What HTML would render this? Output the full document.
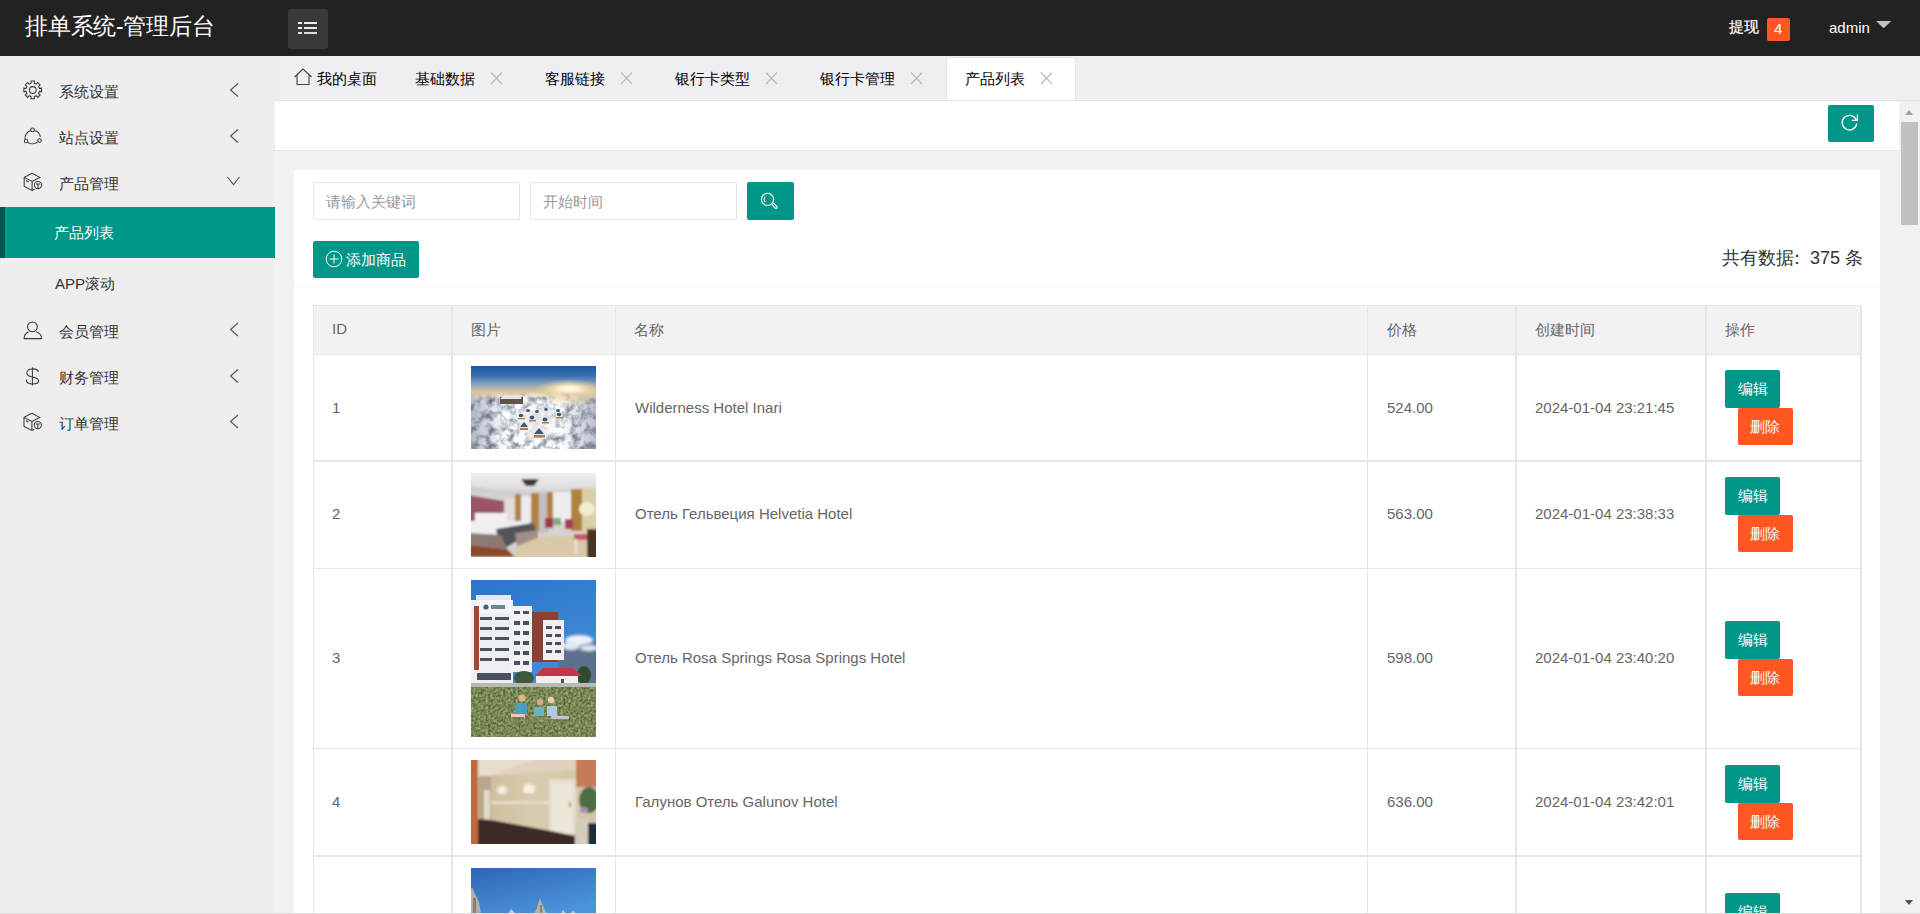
<!DOCTYPE html>
<html><head><meta charset="utf-8">
<style>
*{box-sizing:border-box}
html,body{margin:0;padding:0}
body{width:1920px;height:914px;overflow:hidden;position:relative;background:#f2f2f2;font-family:"Liberation Sans",sans-serif;color:#333}
.a{position:absolute;white-space:nowrap}
.t15{font-size:15px;line-height:15px}
#hdr{position:absolute;left:0;top:0;width:1920px;height:56px;background:#222}
#side{position:absolute;left:0;top:56px;width:275px;height:858px;background:#eee}
#tabs{position:absolute;left:275px;top:56px;width:1645px;height:45px;background:#efeff3;border-bottom:1px solid #e2e2e6}
.tx{color:#333}
.gray{color:#666}
.btn{position:absolute;background:#009688;border-radius:2px}
.ora{background:#FF5722}
.bl{position:absolute;background:#e6e6e6}
</style></head><body>
<!-- HEADER -->
<div id="hdr">
  <div class="a" style="left:25px;top:15px;font-size:23px;line-height:23px;color:#fff;letter-spacing:-0.25px">排单系统-管理后台</div>
  <div class="a" style="left:288px;top:9px;width:40px;height:40px;background:#393939;border-radius:3px"></div>
  <div class="a" style="left:298px;top:22px;width:4px;height:2px;background:#eee"></div>
  <div class="a" style="left:304px;top:22px;width:13px;height:2px;background:#eee"></div>
  <div class="a" style="left:298px;top:27px;width:4px;height:2px;background:#eee"></div>
  <div class="a" style="left:304px;top:27px;width:13px;height:2px;background:#eee"></div>
  <div class="a" style="left:298px;top:32px;width:4px;height:2px;background:#ddd"></div>
  <div class="a" style="left:304px;top:32px;width:13px;height:2px;background:#ddd"></div>
  <div class="a t15" style="left:1729px;top:19px;color:#fff;-webkit-text-stroke:0.2px #fff">提现</div>
  <div class="a" style="left:1767px;top:18px;width:23px;height:23px;background:#FF5722;border-radius:2px"></div>
  <div class="a t15" style="left:1774px;top:21px;color:#fff">4</div>
  <div class="a t15" style="left:1829px;top:20px;color:#fff">admin</div>
  <svg class="a" style="left:1870px;top:15px" width="30" height="20"><polygon points="6,6 21.3,6 13.65,13.3" fill="#c2c2c2"/></svg>
</div>

<!-- SIDEBAR -->
<div id="side"></div>
<div class="a" style="left:0;top:207px;width:275px;height:51px;background:#009688"></div>
<div class="a" style="left:0;top:207px;width:5px;height:51px;background:#04564e"></div>
<div class="a t15 tx" style="left:59px;top:84px">系统设置</div>
<div class="a t15 tx" style="left:59px;top:130px">站点设置</div>
<div class="a t15 tx" style="left:59px;top:176px">产品管理</div>
<div class="a t15" style="left:54px;top:225px;color:#fff">产品列表</div>
<div class="a t15 tx" style="left:55px;top:276px">APP滚动</div>
<div class="a t15 tx" style="left:59px;top:324px">会员管理</div>
<div class="a t15 tx" style="left:59px;top:370px">财务管理</div>
<div class="a t15 tx" style="left:59px;top:416px">订单管理</div>
<svg class="a" style="left:0;top:0" width="275" height="460" fill="none" stroke="#555" stroke-width="1.1">
  <!-- arrows -->
  <path d="M238 83.5 L230.5 90 L238 96.5"/>
  <path d="M238 129.5 L230.5 136 L238 142.5"/>
  <path d="M227.5 177 L233.5 184.5 L239.5 177"/>
  <path d="M238 323 L230.5 329.5 L238 336"/>
  <path d="M238 369.5 L230.5 376 L238 382.5"/>
  <path d="M238 415 L230.5 421.5 L238 428"/>
</svg>

<svg class="a" style="left:0;top:0" width="60" height="460" fill="none" stroke="#3a3a3a" stroke-width="1.05">
  <path d="M31.17 83.27 L30.98 81.07 L34.42 81.07 L34.23 83.27 L36.30 84.13 L37.73 82.44 L40.16 84.87 L38.47 86.30 L39.33 88.37 L41.53 88.18 L41.53 91.62 L39.33 91.43 L38.47 93.50 L40.16 94.93 L37.73 97.36 L36.30 95.67 L34.23 96.53 L34.42 98.73 L30.98 98.73 L31.17 96.53 L29.10 95.67 L27.67 97.36 L25.24 94.93 L26.93 93.50 L26.07 91.43 L23.87 91.62 L23.87 88.18 L26.07 88.37 L26.93 86.30 L25.24 84.87 L27.67 82.44 L29.10 84.13Z"/>
  <circle cx="32.8" cy="90" r="3.4"/>
  <path d="M30.6 130.6 A7.8 7.8 0 0 0 25.1 139.2"/>
  <path d="M34.3 130.6 A7.8 7.8 0 0 1 40.4 136.8"/>
  <path d="M27.8 142.3 A7.8 7.8 0 0 0 37.6 141.9"/>
  <circle cx="32.5" cy="129.9" r="1.8"/>
  <circle cx="26.1" cy="141" r="1.8"/>
  <circle cx="39.5" cy="140.6" r="1.8"/>
  <g id="cube">
  <path d="M32.1 173.3 L24.2 177.4 L24.2 186.4 L32.1 190.5 L34.6 189.3 M32.1 173.3 L39.8 177.4 L32.1 181.5 L24.2 177.4 M32.1 181.5 V190.5 M26.2 180.5 L28.7 182.2"/>
  <circle cx="38" cy="185.1" r="3.6"/>
  <path d="M36 183.9 H40 M38 183.9 V188.6"/>
  </g>
  <use href="#cube" transform="translate(-0.2 240)"/>
  <circle cx="32.4" cy="326.8" r="4.9"/>
  <path d="M28.5 331.7 A8.7 7.5 0 0 0 24.1 338.6 H41.6 A8.7 7.5 0 0 0 36.3 331.7"/>
  <path d="M32.4 367.2 V385.6"/>
  <path d="M38.3 372 C38.2 369.6 35.4 368.8 32.4 368.9 C29 369 26.8 370.6 26.8 373 C26.8 376 30 376.4 32.6 377 C35.8 377.7 38.6 378.4 38.6 381 C38.6 383.2 35.8 384 32.4 384 C28.6 384 26.4 382.6 26.2 379.6"/>
</svg>

<!-- TABS -->
<div id="tabs"></div>
<div class="a" style="left:946px;top:57px;width:130px;height:43px;background:#fff;border:1px solid #e4e4e8;border-bottom:none;border-radius:3px 3px 0 0"></div>
<div class="a t15" style="left:317px;top:71px;color:#000">我的桌面</div>
<div class="a t15" style="left:415px;top:71px;color:#000">基础数据</div>
<div class="a t15" style="left:545px;top:71px;color:#000">客服链接</div>
<div class="a t15" style="left:675px;top:71px;color:#000">银行卡类型</div>
<div class="a t15" style="left:820px;top:71px;color:#000">银行卡管理</div>
<div class="a t15" style="left:965px;top:71px;color:#000">产品列表</div>
<svg class="a" style="left:0;top:0" width="1100" height="100" fill="none" stroke="#b8b8b8" stroke-width="1.1">
  <path d="M491 72.5 L502 84 M502 72.5 L491 84"/>
  <path d="M621 72.5 L632 84 M632 72.5 L621 84"/>
  <path d="M766 72.5 L777 84 M777 72.5 L766 84"/>
  <path d="M911 72.5 L922 84 M922 72.5 L911 84"/>
  <path d="M1041 72.5 L1052 84 M1052 72.5 L1041 84"/>
  <path stroke="#444" d="M294.5 77 L303 69 L311.5 77 M297 75 V84.5 H309 V75"/>
</svg>

<!-- IFRAME CONTENT -->
<div class="a" style="left:275px;top:101px;width:1624px;height:50px;background:#fff;border-bottom:1px solid #e6e6e6"></div>
<div class="btn" style="left:1828px;top:105px;width:46px;height:37px"></div>
<svg class="a" style="left:1828px;top:105px" width="46" height="37" fill="none" stroke="#fff" stroke-width="1.3">
  <path d="M28.75 18.6 A7.3 7.3 0 1 1 28.4 15.2"/>
  <path d="M23.6 15.3 H29.4 V9.6"/>
</svg>
<!-- scrollbar -->
<div class="a" style="left:1899px;top:101px;width:21px;height:813px;background:#f1f1f1"></div>
<div class="a" style="left:1901px;top:122px;width:17px;height:103px;background:#c1c1c1"></div>
<div class="a" style="left:1905px;top:110px;width:0;height:0;border-left:4.5px solid transparent;border-right:4.5px solid transparent;border-bottom:5px solid #a3a3a3"></div>
<div class="a" style="left:1905px;top:900px;width:0;height:0;border-left:4.5px solid transparent;border-right:4.5px solid transparent;border-top:5px solid #505050"></div>

<!-- card -->
<div class="a" style="left:294px;top:170px;width:1586px;height:760px;background:#fff;border-radius:2px"></div>
<div class="a" style="left:313px;top:182px;width:207px;height:38px;border:1px solid #e6e6e6;border-radius:2px;background:#fff"></div>
<div class="a t15" style="left:326px;top:194px;color:#999">请输入关键词</div>
<div class="a" style="left:530px;top:182px;width:207px;height:38px;border:1px solid #e6e6e6;border-radius:2px;background:#fff"></div>
<div class="a t15" style="left:543px;top:194px;color:#999">开始时间</div>
<div class="btn" style="left:747px;top:182px;width:47px;height:38px"></div>
<svg class="a" style="left:747px;top:182px" width="47" height="38" fill="none" stroke="#fff" stroke-width="1.1">
  <circle cx="20.5" cy="17.4" r="6.1"/>
  <path d="M18.2 14.6 A3.8 3.8 0 0 0 18.2 20"/>
  <path d="M24.6 22.4 L28.2 26 A1.1 1.1 0 0 0 29.8 24.4 L26.2 20.8"/>
</svg>
<div class="btn" style="left:313px;top:241px;width:106px;height:37px"></div>
<svg class="a" style="left:313px;top:241px" width="40" height="37" fill="none" stroke="#fff" stroke-width="1">
  <circle cx="21" cy="18" r="7.8"/>
  <path d="M16.5 18 H25.5 M21 13.5 V22.5"/>
</svg>
<div class="a t15" style="left:346px;top:252px;color:#fff">添加商品</div>
<div class="a" style="left:1722px;top:249px;font-size:18px;line-height:18px;color:#333">共有数据<span style="position:relative;left:-6px">：</span><span style="margin-left:-2px">375 条</span></div>
<div class="a" style="left:294px;top:285px;width:1586px;height:1px;background:#f6f6f6"></div>

<!-- table -->
<div class="a" style="left:313px;top:305px;width:1549px;height:50px;background:#f2f2f2"></div>
<div id="tbl">
<div class="bl" style="left:313px;top:305px;width:1549px;height:1px"></div>
<div class="bl" style="left:313px;top:354px;width:1549px;height:1px"></div>
<div class="bl" style="left:313px;top:460px;width:1549px;height:2px"></div>
<div class="bl" style="left:313px;top:568px;width:1549px;height:1px"></div>
<div class="bl" style="left:313px;top:748px;width:1549px;height:1px"></div>
<div class="bl" style="left:313px;top:855px;width:1549px;height:2px"></div>
<div class="bl" style="left:313px;top:305px;width:1px;height:609px"></div>
<div class="bl" style="left:451px;top:305px;width:2px;height:609px"></div>
<div class="bl" style="left:615px;top:305px;width:1px;height:609px"></div>
<div class="bl" style="left:1367px;top:305px;width:1px;height:609px"></div>
<div class="bl" style="left:1515px;top:305px;width:2px;height:609px"></div>
<div class="bl" style="left:1705px;top:305px;width:2px;height:609px"></div>
<div class="bl" style="left:1860px;top:305px;width:2px;height:609px"></div>
<div class="a t15 gray" style="left:332px;top:321px">ID</div>
<div class="a t15 gray" style="left:471px;top:322px">图片</div>
<div class="a t15 gray" style="left:634px;top:322px">名称</div>
<div class="a t15 gray" style="left:1387px;top:322px">价格</div>
<div class="a t15 gray" style="left:1535px;top:322px">创建时间</div>
<div class="a t15 gray" style="left:1725px;top:322px">操作</div>
<div class="a t15 gray" style="left:332px;top:400px">1</div>
<div class="a t15 gray" style="left:635px;top:400px">Wilderness Hotel Inari</div>
<div class="a t15 gray" style="left:1387px;top:400px">524.00</div>
<div class="a t15 gray" style="left:1535px;top:400px">2024-01-04 23:21:45</div>
<div class="a t15 gray" style="left:332px;top:506px">2</div>
<div class="a t15 gray" style="left:635px;top:506px">Отель Гельвеция Helvetia Hotel</div>
<div class="a t15 gray" style="left:1387px;top:506px">563.00</div>
<div class="a t15 gray" style="left:1535px;top:506px">2024-01-04 23:38:33</div>
<div class="a t15 gray" style="left:332px;top:650px">3</div>
<div class="a t15 gray" style="left:635px;top:650px">Отель Rosa Springs Rosa Springs Hotel</div>
<div class="a t15 gray" style="left:1387px;top:650px">598.00</div>
<div class="a t15 gray" style="left:1535px;top:650px">2024-01-04 23:40:20</div>
<div class="a t15 gray" style="left:332px;top:794px">4</div>
<div class="a t15 gray" style="left:635px;top:794px">Галунов Отель Galunov Hotel</div>
<div class="a t15 gray" style="left:1387px;top:794px">636.00</div>
<div class="a t15 gray" style="left:1535px;top:794px">2024-01-04 23:42:01</div>
<div class="btn" style="left:1725px;top:370px;width:55px;height:38px"></div>
<div class="a t15" style="left:1738px;top:381px;color:#fff">编辑</div>
<div class="btn ora" style="left:1738px;top:408px;width:55px;height:37px"></div>
<div class="a t15" style="left:1750px;top:419px;color:#fff">删除</div>
<div class="btn" style="left:1725px;top:477px;width:55px;height:38px"></div>
<div class="a t15" style="left:1738px;top:488px;color:#fff">编辑</div>
<div class="btn ora" style="left:1738px;top:515px;width:55px;height:37px"></div>
<div class="a t15" style="left:1750px;top:526px;color:#fff">删除</div>
<div class="btn" style="left:1725px;top:621px;width:55px;height:38px"></div>
<div class="a t15" style="left:1738px;top:632px;color:#fff">编辑</div>
<div class="btn ora" style="left:1738px;top:659px;width:55px;height:37px"></div>
<div class="a t15" style="left:1750px;top:670px;color:#fff">删除</div>
<div class="btn" style="left:1725px;top:765px;width:55px;height:38px"></div>
<div class="a t15" style="left:1738px;top:776px;color:#fff">编辑</div>
<div class="btn ora" style="left:1738px;top:803px;width:55px;height:37px"></div>
<div class="a t15" style="left:1750px;top:814px;color:#fff">删除</div>
<div class="btn" style="left:1725px;top:893px;width:55px;height:38px"></div>
<div class="a t15" style="left:1738px;top:904px;color:#fff">编辑</div>
<div class="btn ora" style="left:1738px;top:931px;width:55px;height:37px"></div>
<div class="a t15" style="left:1750px;top:942px;color:#fff">删除</div>
<svg class="a" style="left:471px;top:366px" width="125" height="83" viewBox="0 0 125 83">
<defs>
<linearGradient id="s1" x1="0" y1="0" x2="0" y2="1">
<stop offset="0" stop-color="#1c58a4"/><stop offset="0.12" stop-color="#3a70b0"/><stop offset="0.22" stop-color="#8aa4bc"/><stop offset="0.3" stop-color="#d6c29e"/><stop offset="0.36" stop-color="#e6cfa8"/><stop offset="0.42" stop-color="#d0ccd0"/><stop offset="1" stop-color="#d0ccd0"/>
</linearGradient>
<radialGradient id="sun1" cx="0.5" cy="0.5" r="0.5"><stop offset="0" stop-color="#fffef6"/><stop offset="0.3" stop-color="#fff2cc" stop-opacity="0.95"/><stop offset="1" stop-color="#f5c880" stop-opacity="0"/></radialGradient>
<filter id="tx1" x="0" y="0" width="100%" height="100%" color-interpolation-filters="sRGB">
<feTurbulence type="fractalNoise" baseFrequency="0.13" numOctaves="4" seed="11"/>
<feColorMatrix type="matrix" values="1.2 0 0 0 0.26  1.2 0 0 0 0.28  1.0 0 0 0 0.4  0 0 0 0 1"/>
<feGaussianBlur stdDeviation="0.45"/>
</filter>
<linearGradient id="fade1" x1="0" y1="0" x2="0" y2="1"><stop offset="0" stop-color="#fff" stop-opacity="0"/><stop offset="0.15" stop-color="#fff" stop-opacity="1"/></linearGradient>
<mask id="m1"><rect x="0" y="26" width="125" height="57" fill="url(#fade1)"/></mask>
<linearGradient id="sh1" x1="0" y1="0" x2="1" y2="0">
<stop offset="0" stop-color="#58607a" stop-opacity="0.45"/><stop offset="0.28" stop-color="#58607a" stop-opacity="0"/><stop offset="0.72" stop-color="#58607a" stop-opacity="0"/><stop offset="1" stop-color="#58607a" stop-opacity="0.4"/>
</linearGradient>
<filter id="b1"><feGaussianBlur stdDeviation="0.5"/></filter>
<filter id="b1b"><feGaussianBlur stdDeviation="3"/></filter>
</defs>
<rect width="125" height="83" fill="url(#s1)"/>
<ellipse cx="98" cy="23" rx="34" ry="10" fill="url(#sun1)"/>
<g mask="url(#m1)">
<rect x="0" y="26" width="125" height="57" filter="url(#tx1)"/>
<rect x="0" y="26" width="125" height="57" fill="url(#sh1)"/>
</g>
<g filter="url(#b1b)">
<ellipse cx="66" cy="58" rx="20" ry="15" fill="#f6f2f2" opacity="0.75"/>
<ellipse cx="100" cy="33" rx="22" ry="5" fill="#ead0a0" opacity="0.6"/>
</g>
<g filter="url(#b1)">
<rect x="29" y="31" width="23" height="7" fill="#5e524c"/>
<polygon points="29,33 33,29 51,29 50,33" fill="#e6e2e6"/>
<g fill="#ece8e8">
<ellipse cx="57" cy="45" rx="3.4" ry="2.6"/><ellipse cx="66" cy="46" rx="3.4" ry="2.6"/><ellipse cx="75" cy="44" rx="3.2" ry="2.4"/><ellipse cx="87" cy="45" rx="3.4" ry="2.6"/>
<ellipse cx="50" cy="50" rx="3.8" ry="3"/><ellipse cx="61" cy="52" rx="4" ry="3.1"/><ellipse cx="74" cy="54" rx="4.2" ry="3.2"/><ellipse cx="88" cy="49" rx="3.8" ry="3"/>
<ellipse cx="53" cy="60" rx="5" ry="4"/><ellipse cx="68" cy="67" rx="6.5" ry="5"/>
</g>
<g fill="#3c5878">
<ellipse cx="57" cy="44.5" rx="2" ry="1.6"/><ellipse cx="66" cy="45.5" rx="2" ry="1.6"/><ellipse cx="75" cy="43.5" rx="1.8" ry="1.4"/><ellipse cx="87" cy="44.5" rx="2" ry="1.6"/>
<ellipse cx="50" cy="49.5" rx="2.3" ry="1.8"/><ellipse cx="61" cy="51.5" rx="2.4" ry="1.9"/><ellipse cx="74" cy="53.5" rx="2.5" ry="2"/><ellipse cx="88" cy="48.5" rx="2.3" ry="1.8"/>
<polygon points="49,61 53,56 57,61"/><polygon points="63,68 68,62 73,68"/>
</g>
<g fill="#a8824e">
<rect x="49" y="62" width="8" height="2"/><rect x="63" y="69" width="11" height="2.6"/><rect x="47" y="52" width="7" height="1.4"/><rect x="58" y="54" width="7" height="1.4"/><rect x="71" y="56" width="7" height="1.5"/><rect x="85" y="51" width="7" height="1.4"/>
</g>
</g>
</svg>
<svg class="a" style="left:471px;top:473px" width="125" height="84" viewBox="0 0 125 84">
<defs><filter id="b3"><feGaussianBlur stdDeviation="0.8"/></filter>
<linearGradient id="c2" x1="0" y1="0" x2="0" y2="1"><stop offset="0" stop-color="#f2f2f2"/><stop offset="1" stop-color="#dcdcdc"/></linearGradient></defs>
<g filter="url(#b3)">
<rect x="-3" y="-3" width="131" height="90" fill="#d5d2d0"/>
<rect x="-3" y="-3" width="131" height="20" fill="url(#c2)"/>
<polygon points="-3,12 40,20 125,15 125,18 40,24 -3,18" fill="#cfcfd2"/>
<polygon points="-3,22 33,28 33,48 -3,50" fill="#9c5466"/>
<rect x="35" y="26" width="10" height="22" fill="#e2ddd8"/>
<rect x="44" y="21" width="6" height="28" fill="#b5813f"/>
<rect x="50" y="23" width="10" height="26" fill="#eceaee"/>
<rect x="60" y="20" width="8" height="38" fill="#b3803e"/>
<rect x="68" y="20" width="9" height="40" fill="#c2bfc2"/>
<rect x="76" y="19" width="6" height="28" fill="#b3803e"/>
<rect x="82" y="19" width="18" height="30" fill="#eeeef0"/>
<rect x="100" y="16" width="11" height="42" fill="#b2803e"/>
<rect x="111" y="15" width="17" height="48" fill="#d9cfa8"/>
<ellipse cx="116" cy="36" rx="8" ry="7" fill="#f2ecd0"/>
<rect x="4" y="40" width="32" height="10" fill="#f4f0f2"/>
<polygon points="-3,48 55,48 62,52 30,62 -3,62" fill="#f0eef0"/>
<polygon points="25,56 62,50 65,57 36,74 28,72" fill="#53535c"/>
<polygon points="-3,60 30,62 36,76 -3,72" fill="#8a7a72"/>
<polygon points="44,60 67,57 67,67 46,73" fill="#a48c88"/>
<polygon points="-3,72 36,76 44,84 -3,84" fill="#8c4a2a"/>
<polygon points="44,84 45,74 68,64 125,62 125,84" fill="#d9c9a9"/>
<rect x="74" y="45" width="8" height="10" fill="#a23446"/>
<rect x="94" y="46" width="8" height="10" fill="#a8404f"/>
<rect x="82" y="45" width="8" height="7" fill="#8aa880"/>
<rect x="103" y="61" width="17" height="6" fill="#c65a68"/>
<rect x="104" y="66" width="2" height="14" fill="#efe8e0"/>
<rect x="116" y="56" width="12" height="30" fill="#4c3028"/>
<path d="M50 6 L68 6 L63 13 L55 13 Z" fill="#3e3440"/>
</g>
</svg>
<svg class="a" style="left:471px;top:580px" width="125" height="157" viewBox="0 0 125 157">
<defs><linearGradient id="sk3" x1="0" y1="0" x2="0.3" y2="1"><stop offset="0" stop-color="#2b76cc"/><stop offset="1" stop-color="#4a92d8"/></linearGradient>
<filter id="tx3" x="0" y="0" width="100%" height="100%" color-interpolation-filters="sRGB">
<feTurbulence type="fractalNoise" baseFrequency="0.4" numOctaves="2" seed="4"/>
<feColorMatrix type="matrix" values="0.55 0 0 0 0.2  0.55 0 0 0 0.25  0.45 0 0 0 0.11  0 0 0 0 1"/>
<feGaussianBlur stdDeviation="0.4"/>
</filter>
<filter id="b4"><feGaussianBlur stdDeviation="0.6"/></filter>
<filter id="b4b"><feGaussianBlur stdDeviation="1.5"/></filter></defs>
<rect width="125" height="157" fill="url(#sk3)"/>
<g filter="url(#b4b)">
<polygon points="88,72 102,62 114,66 128,60 128,104 88,104" fill="#5c6f8e"/>
<ellipse cx="108" cy="60" rx="14" ry="5" fill="#eef2f8"/>
<ellipse cx="100" cy="66" rx="9" ry="4" fill="#e2e8f2"/>
<ellipse cx="118" cy="68" rx="9" ry="3" fill="#dfe6f0"/>
</g>
<g filter="url(#b4)">
<rect x="-2" y="20" width="44" height="86" fill="#efeff1"/>
<rect x="5" y="15" width="35" height="5" fill="#e4e8f0"/>
<rect x="5" y="20" width="35" height="13" fill="#f6f6f8"/>
<circle cx="15" cy="27" r="2.6" fill="#2a6a80"/>
<rect x="20" y="25" width="14" height="4" fill="#6a8a98"/>
<rect x="3" y="26" width="5" height="64" fill="#9a4a36"/>
<rect x="40" y="26" width="21" height="66" fill="#f2f2f2"/>
<rect x="61" y="32" width="26" height="50" fill="#8a3f30"/>
<rect x="72" y="40" width="21" height="40" fill="#f0f0f0"/>
<g fill="#4a5260">
<rect x="9" y="37" width="12" height="3"/><rect x="24" y="37" width="14" height="3"/>
<rect x="9" y="47" width="12" height="3"/><rect x="24" y="47" width="14" height="3"/>
<rect x="9" y="57" width="12" height="3"/><rect x="24" y="57" width="14" height="3"/>
<rect x="9" y="68" width="12" height="3"/><rect x="24" y="68" width="14" height="3"/>
<rect x="9" y="78" width="12" height="3"/><rect x="24" y="78" width="14" height="3"/>
<rect x="6" y="93" width="34" height="7"/>
<rect x="43" y="31" width="6" height="3"/><rect x="52" y="31" width="6" height="3"/>
<rect x="43" y="41" width="6" height="4"/><rect x="52" y="41" width="6" height="4"/>
<rect x="43" y="51" width="6" height="4"/><rect x="52" y="51" width="6" height="4"/>
<rect x="43" y="61" width="6" height="4"/><rect x="52" y="61" width="6" height="4"/>
<rect x="43" y="71" width="6" height="4"/><rect x="52" y="71" width="6" height="4"/>
<rect x="43" y="81" width="6" height="4"/><rect x="52" y="81" width="6" height="4"/>
<rect x="75" y="46" width="6" height="3"/><rect x="84" y="46" width="6" height="3"/>
<rect x="75" y="54" width="6" height="3"/><rect x="84" y="54" width="6" height="3"/>
<rect x="75" y="62" width="6" height="3"/><rect x="84" y="62" width="6" height="3"/>
<rect x="75" y="70" width="6" height="3"/><rect x="84" y="70" width="6" height="3"/>
</g>
<ellipse cx="53" cy="98" rx="10" ry="7" fill="#40593a"/>
<ellipse cx="113" cy="95" rx="7" ry="9" fill="#33482e"/>
<polygon points="64,96 72,88 102,88 111,96" fill="#c8364a"/>
<rect x="65" y="96" width="42" height="12" fill="#f2f0ee"/>
<rect x="90" y="99" width="3" height="8" fill="#505050"/>
<rect x="-2" y="103" width="129" height="5" fill="#b8bab4"/>
</g>
<rect x="0" y="107" width="125" height="50" filter="url(#tx3)"/>
<g filter="url(#b4)">
<rect x="44" y="123" width="12" height="11" fill="#4e9cc4"/>
<rect x="63" y="127" width="10" height="9" fill="#6ab0d0"/>
<rect x="76" y="126" width="10" height="10" fill="#a8cce0"/>
<circle cx="51" cy="118" r="3.6" fill="#e0b48a"/>
<circle cx="69" cy="122" r="3.2" fill="#d8a880"/>
<circle cx="80" cy="120" r="3.2" fill="#e8d0a0"/>
<rect x="40" y="134" width="14" height="3" fill="#e8c8b0"/>
<rect x="80" y="136" width="18" height="3" fill="#c8c0d0"/>
</g>
</svg>
<svg class="a" style="left:471px;top:760px" width="125" height="84" viewBox="0 0 125 84">
<defs><filter id="b5"><feGaussianBlur stdDeviation="0.8"/></filter>
<radialGradient id="l5" cx="0.5" cy="0.5" r="0.5"><stop offset="0" stop-color="#fffcf4"/><stop offset="0.5" stop-color="#fbf2e2" stop-opacity="0.8"/><stop offset="1" stop-color="#f0e6d0" stop-opacity="0"/></radialGradient>
<linearGradient id="w5" x1="0" y1="0" x2="1" y2="0"><stop offset="0" stop-color="#c8b898"/><stop offset="0.5" stop-color="#d8ccae"/><stop offset="1" stop-color="#d0c4a8"/></linearGradient></defs>
<g filter="url(#b5)">
<rect x="-3" y="-3" width="131" height="90" fill="url(#w5)"/>
<polygon points="7,-3 70,-3 20,16 7,18" fill="#e8dccd"/>
<polygon points="70,-3 110,-3 105,10 20,16" fill="#e0d2bc"/>
<rect x="8" y="16" width="12" height="44" fill="#b8a68a"/>
<rect x="13" y="30" width="6" height="30" fill="#e2dac8"/>
<rect x="-3" y="-3" width="10" height="90" fill="#c0693e"/>
<rect x="20" y="41" width="58" height="3" fill="#e6dcc6"/>
<rect x="78" y="19" width="27" height="55" fill="#e6dece"/>
<rect x="81" y="23" width="20" height="50" fill="#ece6d8"/>
<rect x="98" y="42" width="2" height="5" fill="#b09050"/>
<rect x="105" y="-3" width="23" height="30" fill="#c47c58"/>
<ellipse cx="118" cy="40" rx="10" ry="13" fill="#4e6e40"/>
<ellipse cx="113" cy="50" rx="4" ry="3" fill="#a090c0"/>
<rect x="104" y="58" width="14" height="30" fill="#d4ccbc"/>
<rect x="117" y="63" width="11" height="25" fill="#1e2e36"/>
<polygon points="7,59 20,60 80,71 104,76 104,88 7,88" fill="#3a2a27"/>
<ellipse cx="31" cy="30" rx="7" ry="6" fill="url(#l5)"/>
<ellipse cx="58" cy="28" rx="8" ry="6" fill="url(#l5)"/>
<rect x="28" y="29" width="6" height="4" fill="#f4f0ea"/>
<rect x="53" y="28" width="10" height="5" fill="#f4f0ea"/>
</g>
</svg>
<svg class="a" style="left:471px;top:868px" width="125" height="46" viewBox="0 0 125 46">
<defs><linearGradient id="sk5" x1="0" y1="0" x2="0.6" y2="1"><stop offset="0" stop-color="#2e66b4"/><stop offset="1" stop-color="#4b93da"/></linearGradient>
<filter id="b6"><feGaussianBlur stdDeviation="0.6"/></filter></defs>
<rect width="125" height="46" fill="url(#sk5)"/>
<g filter="url(#b6)">
<polygon points="1,19 4,26 8,34 10,46 0,46 0,22" fill="#b4aea6"/>
<polygon points="69,30 71,36 74,42 76,46 63,46 66,40" fill="#b8b2aa"/>
<polygon points="40,41 43,44 45,46 37,46" fill="#d0ccc6"/>
<polygon points="92,42 95,46 90,46" fill="#d0ccc6"/>
<polygon points="102,43 106,46 99,46" fill="#d0ccc6"/>
</g>
<g fill="#5a5048" opacity="0.5"><rect x="2" y="30" width="3" height="16"/><rect x="69" y="37" width="2" height="9"/></g>
</svg>
<div class="a" style="left:0;top:913px;width:1920px;height:1px;background:#dcdcdc"></div>
</div>
</body></html>
